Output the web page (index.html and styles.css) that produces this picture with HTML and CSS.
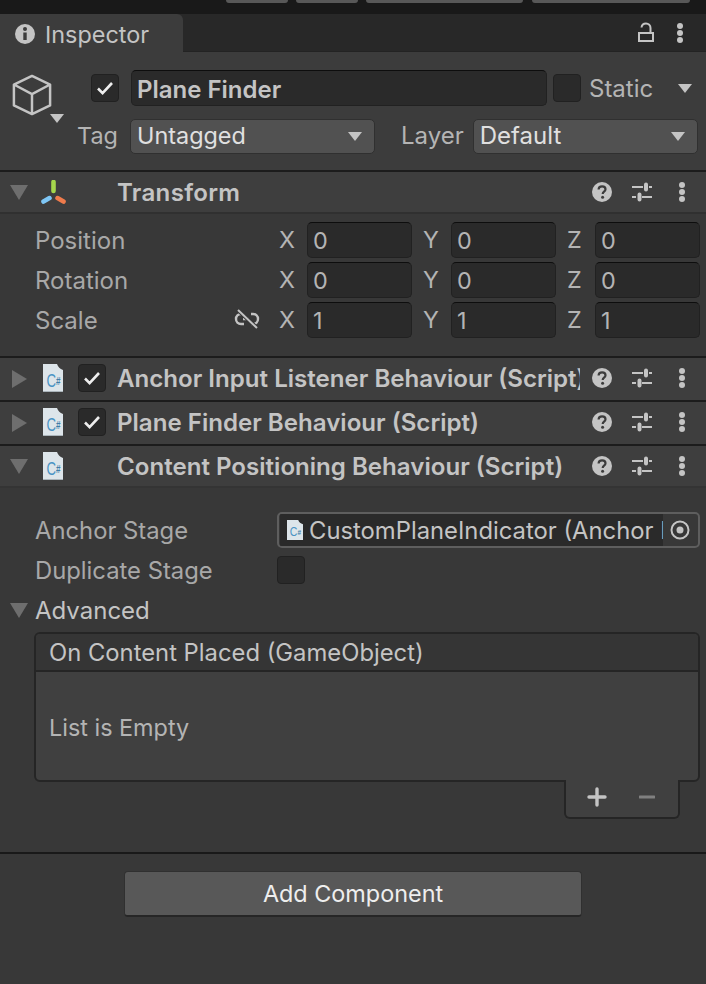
FILE: index.html
```html
<!DOCTYPE html>
<html lang="en">
<head>
    <meta charset="UTF-8">
    <title>Inspector</title>
    <link rel="stylesheet" href="styles.css">
</head>
<body>
    <svg class="defs" width="0" height="0">
        <symbol id="help" viewBox="0 0 20 20">
            <circle cx="10" cy="10" r="10" fill="#c4c4c4"/>
            <path d="M6.6 7.6c0-2 1.5-3.2 3.5-3.2s3.4 1.1 3.4 2.9c0 2.4-2.8 2.4-2.8 4.6" fill="none" stroke="#3c3c3c" stroke-width="2.2"/>
            <circle cx="10.6" cy="15.2" r="1.5" fill="#3c3c3c"/>
        </symbol>
        <symbol id="sliders" viewBox="0 0 20 20">
            <path d="M0 5h11M17 5h3M0 15h4M10 15h10" fill="none" stroke="#c4c4c4" stroke-width="2"/>
            <path d="M14 2.500v5M7.500 12.500v5" fill="none" stroke="#c4c4c4" stroke-width="4" stroke-linecap="round"/>
        </symbol>
        <symbol id="dots" viewBox="0 0 8 20">
            <circle cx="4" cy="3" r="3" fill="#c4c4c4"/>
            <circle cx="4" cy="10" r="3" fill="#c4c4c4"/>
            <circle cx="4" cy="17" r="3" fill="#c4c4c4"/>
        </symbol>
        <symbol id="check" viewBox="0 0 18 16">
            <path d="M2 8.500l4.600 4.600L16 3" fill="none" stroke="#eeeeee" stroke-width="2.600"/>
        </symbol>
    </svg>

    <div class="top-strip">
        <span class="strip-btn strip-a"></span>
        <span class="strip-btn strip-b"></span>
        <span class="strip-btn strip-c"></span>
        <span class="strip-btn strip-d"></span>
    </div>

    <div class="tab-bar">
        <div class="tab">
            <svg class="tab-icon" viewBox="0 0 20 20">
                <circle cx="10" cy="10" r="10" fill="#c4c4c4"/>
                <circle cx="10" cy="5" r="2" fill="#3c3c3c"/>
                <path d="M10 8.500v7.500" stroke="#3c3c3c" stroke-width="3.400"/>
            </svg>
            <span class="tab-text">Inspector</span>
        </div>
        <div class="tab-actions">
            <svg class="lock-icon" viewBox="0 0 16 20">
                <path d="M1 11h14v8H1zM3.500 5.500C3.800 3 5.500 1.500 8 1.500s4.500 2 4.500 4.500v5" fill="none" stroke="#c4c4c4" stroke-width="2"/>
            </svg>
            <svg class="icon-dots"><use href="#dots"/></svg>
        </div>
    </div>

    <div class="object-head">
        <div class="object-icon">
            <svg class="cube" viewBox="0 0 42 44">
                <path d="M21 2l19 9v22L21 42 2 33V11zM2 11l19 10 19-10M21 21v21" fill="none" stroke="#c4c4c4" stroke-width="2.600" stroke-linejoin="round"/>
            </svg>
            <span class="arrow-down small-arrow"></span>
        </div>
        <div class="object-fields">
            <div class="name-row">
                <span class="checkbox"><svg class="check"><use href="#check"/></svg></span>
                <div class="name-field">Plane Finder</div>
                <span class="checkbox"></span>
                <span class="static-label">Static</span>
                <span class="arrow-down small-arrow"></span>
            </div>
            <div class="tag-row">
                <span class="tag-label">Tag</span>
                <div class="dropdown tag-drop">Untagged<span class="arrow-down small-arrow"></span></div>
                <span class="layer-label">Layer</span>
                <div class="dropdown layer-drop">Default<span class="arrow-down small-arrow"></span></div>
            </div>
        </div>
    </div>

    <div class="comp-head transform-head">
        <span class="arrow-down"></span>
        <svg class="axis-icon" viewBox="0 0 26 24">
            <path d="M12.500 2v9" stroke="#a5d64c" stroke-width="4.600" stroke-linecap="round"/>
            <path d="M2.500 21.500l6-3.400" stroke="#7ec6f5" stroke-width="4.600" stroke-linecap="round"/>
            <path d="M16.500 18.100l6 3.400" stroke="#ef7b4c" stroke-width="4.600" stroke-linecap="round"/>
        </svg>
        <span class="comp-title">Transform</span>
        <div class="comp-actions">
            <svg class="icon-help"><use href="#help"/></svg>
            <svg class="icon-sliders"><use href="#sliders"/></svg>
            <svg class="icon-dots"><use href="#dots"/></svg>
        </div>
    </div>

    <div class="transform-body">
        <div class="vec-row">
            <span class="vec-label">Position</span>
            <div class="vec-fields">
                <div class="vec-axis"><span>X</span><div class="num-field">0</div></div>
                <div class="vec-axis"><span>Y</span><div class="num-field">0</div></div>
                <div class="vec-axis"><span>Z</span><div class="num-field">0</div></div>
            </div>
        </div>
        <div class="vec-row">
            <span class="vec-label">Rotation</span>
            <div class="vec-fields">
                <div class="vec-axis"><span>X</span><div class="num-field">0</div></div>
                <div class="vec-axis"><span>Y</span><div class="num-field">0</div></div>
                <div class="vec-axis"><span>Z</span><div class="num-field">0</div></div>
            </div>
        </div>
        <div class="vec-row">
            <span class="vec-label">Scale</span>
            <svg class="link-icon" viewBox="0 0 26 20">
                <path d="M9 5H7a5 5 0 0 0 0 10h3M17 5h2a5 5 0 0 1 0 10h-2M9 10h6" fill="none" stroke="#c4c4c4" stroke-width="2.400"/>
                <path d="M4 1l19 18" stroke="#383838" stroke-width="4"/>
                <path d="M4 1l19 18" stroke="#c4c4c4" stroke-width="2"/>
            </svg>
            <div class="vec-fields">
                <div class="vec-axis"><span>X</span><div class="num-field">1</div></div>
                <div class="vec-axis"><span>Y</span><div class="num-field">1</div></div>
                <div class="vec-axis"><span>Z</span><div class="num-field">1</div></div>
            </div>
        </div>
    </div>

    <div class="comp-head">
        <span class="arrow-right"></span>
        <svg class="script-icon" viewBox="0 0 20 28">
            <path d="M0 0h14c1 3 3 5 6 6v22H0z" fill="#dde5ea"/>
            <path d="M0 27h20v1H0z" fill="#aab4ba"/>
            <text x="3.500" y="23" class="script-c" textLength="14" lengthAdjust="spacingAndGlyphs">C<tspan class="script-hash" dy="-2">#</tspan></text>
        </svg>
        <span class="checkbox comp-check"><svg class="check"><use href="#check"/></svg></span>
        <span class="comp-title">Anchor Input Listener Behaviour (Script)</span>
        <div class="comp-actions">
            <svg class="icon-help"><use href="#help"/></svg>
            <svg class="icon-sliders"><use href="#sliders"/></svg>
            <svg class="icon-dots"><use href="#dots"/></svg>
        </div>
    </div>

    <div class="comp-head">
        <span class="arrow-right"></span>
        <svg class="script-icon" viewBox="0 0 20 28">
            <path d="M0 0h14c1 3 3 5 6 6v22H0z" fill="#dde5ea"/>
            <path d="M0 27h20v1H0z" fill="#aab4ba"/>
            <text x="3.500" y="23" class="script-c" textLength="14" lengthAdjust="spacingAndGlyphs">C<tspan class="script-hash" dy="-2">#</tspan></text>
        </svg>
        <span class="checkbox comp-check"><svg class="check"><use href="#check"/></svg></span>
        <span class="comp-title">Plane Finder Behaviour (Script)</span>
        <div class="comp-actions">
            <svg class="icon-help"><use href="#help"/></svg>
            <svg class="icon-sliders"><use href="#sliders"/></svg>
            <svg class="icon-dots"><use href="#dots"/></svg>
        </div>
    </div>

    <div class="comp-head last-head">
        <span class="arrow-down"></span>
        <svg class="script-icon" viewBox="0 0 20 28">
            <path d="M0 0h14c1 3 3 5 6 6v22H0z" fill="#dde5ea"/>
            <path d="M0 27h20v1H0z" fill="#aab4ba"/>
            <text x="3.500" y="23" class="script-c" textLength="14" lengthAdjust="spacingAndGlyphs">C<tspan class="script-hash" dy="-2">#</tspan></text>
        </svg>
        <span class="comp-title">Content Positioning Behaviour (Script)</span>
        <div class="comp-actions">
            <svg class="icon-help"><use href="#help"/></svg>
            <svg class="icon-sliders"><use href="#sliders"/></svg>
            <svg class="icon-dots"><use href="#dots"/></svg>
        </div>
    </div>

    <div class="script-body">
        <div class="prop-row">
            <span class="prop-label">Anchor Stage</span>
            <div class="object-field">
                <div class="object-value">
                    <svg class="mini-script" viewBox="0 0 20 28" preserveAspectRatio="none">
                        <path d="M0 0h14c1 3 3 5 6 6v22H0z" fill="#dde5ea"/>
                        <text x="3.500" y="23" class="script-c" textLength="14" lengthAdjust="spacingAndGlyphs">C<tspan class="script-hash" dy="-2">#</tspan></text>
                    </svg>
                    <span class="object-text">CustomPlaneIndicator (Anchor Behaviour)</span>
                </div>
                <svg class="target-icon" viewBox="0 0 20 20">
                    <circle cx="10" cy="10" r="8.500" fill="none" stroke="#c4c4c4" stroke-width="2"/>
                    <circle cx="10" cy="10" r="3.500" fill="#c4c4c4"/>
                </svg>
            </div>
        </div>
        <div class="prop-row dup-row">
            <span class="prop-label">Duplicate Stage</span>
            <span class="checkbox"></span>
        </div>
        <div class="advanced-row">
            <span class="arrow-down"></span>
            <span class="prop-text">Advanced</span>
        </div>
        <div class="event-list">
            <div class="event-head">On Content Placed (GameObject)</div>
            <div class="event-body">List is Empty</div>
        </div>
        <div class="list-footer">
            <svg class="plus-icon" viewBox="0 0 20 20"><path d="M10 2v16M2 10h16" stroke="#c4c4c4" stroke-width="3.400" stroke-linecap="round"/></svg>
            <svg class="minus-icon" viewBox="0 0 16 4"><path d="M1 2h14" stroke="#808080" stroke-width="3" stroke-linecap="round"/></svg>
        </div>
    </div>

    <div class="add-wrap">
        <div class="add-btn">Add Component</div>
    </div>
</body>
</html>
```

FILE: styles.css
```css
* {
    box-sizing: border-box;
}

body {
    margin: 0;
    width: 706px;
    height: 984px;
    overflow: hidden;
    background-color: #383838;
    color: #c4c4c4;
    font-family: "Inter", "Liberation Sans", sans-serif;
    font-size: 23.4px;
    line-height: 36px;
}

.defs {
    position: absolute;
}

.script-c {
    font-family: "Liberation Sans", sans-serif;
    font-size: 18px;
    fill: #4a93c4;
}

.script-hash {
    font-size: 11px;
    font-weight: 700;
    fill: #3f7ea8;
}

.top-strip {
    height: 14px;
    background-color: #191919;
    position: relative;
}

.strip-btn {
    position: absolute;
    top: 0;
    height: 3px;
    background-color: #585858;
    border-radius: 0 0 3px 3px;
}

.strip-a { left: 226px; width: 62px; }
.strip-b { left: 296px; width: 62px; }
.strip-c { left: 366px; width: 157px; }
.strip-d { left: 532px; width: 158px; }

.tab-bar {
    height: 38px;
    display: flex;
    justify-content: space-between;
    background-color: #282828;
    border-bottom: 1px solid #232323;
}

.tab {
    width: 183px;
    height: 38px;
    padding: 2px 0 0 15px;
    display: flex;
    align-items: center;
    gap: 10px;
    background-color: #3c3c3c;
    border-radius: 0 6px 0 0;
}

.tab-text {
    padding-top: 2px;
}

.tab-icon {
    width: 20px;
    height: 20px;
}

.tab-actions {
    display: flex;
    align-items: center;
    gap: 22px;
    padding-right: 22px;
}

.lock-icon {
    width: 16px;
    height: 20px;
    margin-bottom: 2px;
}

.icon-dots {
    width: 8px;
    height: 20px;
}

.object-head {
    height: 118px;
    padding: 18px 8px 0 12px;
    display: flex;
    background-color: #3c3c3c;
}

.object-icon {
    width: 64px;
    flex: none;
    position: relative;
}

.cube {
    width: 40px;
    height: 42px;
    display: block;
    margin-top: 4px;
}

.object-icon .small-arrow {
    position: absolute;
    left: 38px;
    top: 44px;
}

.object-fields {
    flex: 1;
}

.name-row {
    display: flex;
    align-items: center;
    height: 36px;
    padding-left: 15px;
}

.checkbox {
    width: 28px;
    height: 28px;
    flex: none;
    display: flex;
    align-items: center;
    justify-content: center;
    background-color: #2a2a2a;
    border: 1px solid #212121;
    border-radius: 4px;
}

.check {
    width: 18px;
    height: 16px;
}

.name-field {
    width: 416px;
    height: 36px;
    margin: 0 6px 0 12px;
    padding-left: 5px;
    font-size: 24px;
    font-weight: 600;
    line-height: 37px;
    background-color: #2a2a2a;
    border: 1px solid #212121;
    border-top-color: #0d0d0d;
    border-radius: 5px;
}

.static-label {
    margin: 0 25px 0 8px;
    padding-top: 2px;
    font-size: 24px;
    color: #b4b4b4;
}

.arrow-down {
    width: 0;
    height: 0;
    flex: none;
    border-left: 9px solid transparent;
    border-right: 9px solid transparent;
    border-top: 15px solid #6e6e6e;
}

.small-arrow {
    border-left-width: 7px;
    border-right-width: 7px;
    border-top: 9px solid #c4c4c4;
}

.arrow-right {
    width: 0;
    height: 0;
    flex: none;
    margin-left: 2px;
    border-top: 9px solid transparent;
    border-bottom: 9px solid transparent;
    border-left: 15px solid #6e6e6e;
}

.tag-row {
    display: flex;
    align-items: center;
    margin-top: 12px;
    height: 36px;
}

.tag-label {
    width: 53px;
    flex: none;
    margin-left: 1px;
    color: #b4b4b4;
}

.layer-label {
    margin: 0 9px 0 26px;
    font-size: 24px;
    color: #b4b4b4;
}

.dropdown {
    height: 35px;
    padding: 0 12px 0 6px;
    display: flex;
    align-items: center;
    justify-content: space-between;
    color: #e0e0e0;
    line-height: 34px;
    background-color: #515151;
    border: 1px solid #303030;
    border-radius: 5px;
}

.tag-drop { width: 245px; }
.layer-drop { flex: 1; font-size: 24px; }

.comp-head {
    height: 44px;
    padding-left: 10px;
    display: flex;
    align-items: center;
    background-color: #3e3e3e;
    border-top: 2px solid #1c1c1c;
    position: relative;
}

.transform-head {
    height: 42px;
}

.transform-head .comp-title {
    letter-spacing: 0.3px;
}

.axis-icon {
    width: 26px;
    height: 24px;
    margin-left: 13px;
    flex: none;
}

.script-icon {
    width: 20px;
    height: 28px;
    position: absolute;
    left: 43px;
    top: 6px;
}

.comp-check {
    position: absolute;
    left: 78px;
    top: 6px;
}

.comp-title {
    position: absolute;
    left: 117px;
    top: 3px;
    width: 463px;
    font-size: 24.1px;
    font-weight: 600;
    white-space: nowrap;
    overflow: hidden;
}

.comp-actions {
    position: absolute;
    right: 0;
    top: 10px;
    width: 114px;
    height: 20px;
}

.icon-help,
.icon-sliders,
.comp-actions .icon-dots {
    position: absolute;
    top: 0;
}

.icon-help { left: 0; width: 20px; height: 20px; }
.icon-sliders { left: 40px; width: 20px; height: 20px; }
.comp-actions .icon-dots { left: 86px; }

.last-head {
    border-bottom: 2px solid #343434;
}

.transform-body {
    height: 144px;
    padding: 8px 6px 0 35px;
    border-top: 2px solid #303030;
}

.vec-row {
    display: flex;
    align-items: center;
    height: 36px;
    margin-bottom: 4px;
    position: relative;
}

.vec-label {
    width: 244px;
    flex: none;
    padding-top: 2px;
    font-size: 24px;
    color: #a8a8a8;
}

.link-icon {
    position: absolute;
    left: 199px;
    top: 7px;
    width: 26px;
    height: 20px;
}

.vec-fields {
    display: flex;
    gap: 11px;
}

.vec-axis {
    width: 133px;
    display: flex;
    align-items: center;
    justify-content: space-between;
    color: #b4b4b4;
}

.num-field {
    width: 105px;
    height: 36px;
    padding-left: 5px;
    line-height: 35px;
    background-color: #2a2a2a;
    border: 1px solid #212121;
    border-top-color: #0d0d0d;
    border-radius: 5px;
}

.script-body {
    height: 364px;
    padding: 24px 6px 0 35px;
}

.prop-row {
    display: flex;
    align-items: center;
    height: 36px;
}

.dup-row {
    margin-top: 4px;
}

.prop-label {
    width: 242px;
    flex: none;
    padding-top: 2px;
    font-size: 23.8px;
    color: #a8a8a8;
}

.object-field {
    flex: 1;
    height: 36px;
    padding: 1px 0 1px 1px;
    display: flex;
    align-items: center;
    border: 2px solid #5e5e5e;
    border-radius: 5px;
    overflow: hidden;
}

.object-value {
    width: 383px;
    height: 32px;
    flex: none;
    padding-left: 7px;
    display: flex;
    align-items: center;
    gap: 6px;
    background-color: #2a2a2a;
    overflow: hidden;
    white-space: nowrap;
}

.mini-script {
    width: 16px;
    height: 20px;
    flex: none;
}

.object-text {
    padding-top: 2px;
    font-size: 23.8px;
    line-height: 32px;
}

.target-icon {
    width: 20px;
    height: 20px;
    margin-left: 7px;
    flex: none;
}

.advanced-row {
    display: flex;
    align-items: center;
    gap: 7px;
    height: 36px;
    margin: 4px 0 0 -25px;
}

.prop-text {
    padding-top: 2px;
    font-size: 24px;
}

.event-list {
    margin: 4px 0 0 -1px;
    height: 150px;
    border: 2px solid #252525;
    border-radius: 6px;
    background-color: #404040;
    overflow: hidden;
}

.event-head {
    height: 38px;
    padding: 1px 0 0 13px;
    font-size: 23.8px;
    background-color: #353535;
    border-bottom: 2px solid #252525;
}

.event-body {
    padding: 38px 0 0 13px;
    color: #b4b4b4;
}

.list-footer {
    width: 116px;
    height: 39px;
    margin: -2px 20px 0 auto;
    padding: 0 0 3px 21px;
    display: flex;
    align-items: center;
    gap: 32px;
    background-color: #404040;
    border: 2px solid #252525;
    border-top: 0;
    border-radius: 0 0 6px 6px;
    position: relative;
}

.plus-icon {
    width: 20px;
    height: 20px;
}

.minus-icon {
    width: 16px;
    height: 4px;
}

.add-wrap {
    padding-top: 17px;
    border-top: 2px solid #191919;
    display: flex;
    justify-content: center;
}

.add-btn {
    width: 458px;
    height: 46px;
    text-align: center;
    color: #eeeeee;
    line-height: 44px;
    background-color: #585858;
    border: 1px solid #303030;
    border-bottom: 2px solid #262626;
    border-radius: 4px;
}
```
